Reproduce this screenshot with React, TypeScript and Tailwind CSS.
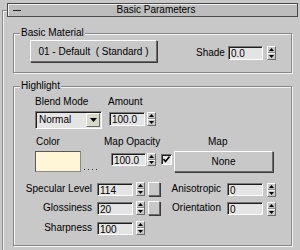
import React from "react";

const font = { fontFamily: '"Liberation Sans", Arial, sans-serif' };

function Spinner({ h = 14 }: { h?: number }) {
  return (
    <div
      className={`w-[9px] flex flex-col border border-t-white border-l-white border-r-[#6a6a6a] border-b-[#6a6a6a] bg-[#c8c8c8] ${h === 13 ? "h-[13px]" : "h-[14px]"}`}
    >
      <div className="flex-1 flex items-center justify-center border-b border-b-[#8a8a8a]">
        <svg width="5" height="3" viewBox="0 0 5 3">
          <polygon points="2.5,0 5,3 0,3" fill="#000" />
        </svg>
      </div>
      <div className="flex-1 flex items-center justify-center border-t border-t-white">
        <svg width="5" height="3" viewBox="0 0 5 3">
          <polygon points="0,0 5,0 2.5,3" fill="#000" />
        </svg>
      </div>
    </div>
  );
}

function Field({ v, w = "w-[36px]", h = "h-[13px]" }: { v: string; w?: string; h?: string }) {
  return (
    <div
      className={`${w} ${h} bg-[#e4e4e4] border border-t-[#7a7a7a] border-l-[#7a7a7a] border-r-white border-b-white shadow-[inset_1px_1px_0_#1e1e1e] text-[10px] leading-[11px] pl-[2px] pt-[1px] text-black overflow-hidden`}
    >
      {v}
    </div>
  );
}

function Group({ label, className, children }: { label: string; className: string; children: React.ReactNode }) {
  return (
    <div
      className={`relative border border-[#878787] shadow-[inset_1px_1px_0_#f4f4f4,1px_1px_0_#f4f4f4] ${className}`}
    >
      <span className="absolute left-[6px] top-[-7px] px-[1px] bg-[#c8c8c8] text-[10px] leading-[12px] text-black">
        {label}
      </span>
      {children}
    </div>
  );
}

const raised =
  "bg-[#c8c8c8] border border-t-white border-l-white border-r-[#6a6a6a] border-b-[#6a6a6a] shadow-[1px_1px_0_#3a3a3a]";

export default function App() {
  return (
    <div className="w-[300px] h-[250px] bg-[#c8c8c8] overflow-hidden pt-[3px] text-black" style={font}>
      {/* title bar */}
      <div className="relative z-10 ml-[7px] w-[291px] h-[14px] bg-[#bdbdbd] border border-[#4a4a4a] shadow-[inset_1px_1px_0_#eeeeee] flex items-center">
        <span className="ml-[5px] w-[8px] h-[1px] bg-[#222]" />
        <span className="flex-1 text-center text-[10px] leading-[12px] pr-[6px]">Basic Parameters</span>
      </div>

      {/* outer panel */}
      <div className="-mt-[7px] ml-[2px] w-[296px] h-[250px] border-l border-t border-[#8a8a8a] shadow-[inset_1px_1px_0_#f0f0f0] pt-[22px] pl-[10px]">
        <Group label="Basic Material" className="w-[279px] h-[40px]">
          <div className="flex items-start pt-[6px] pl-[16px]">
            <div className={`${raised} w-[127px] h-[22px] flex items-center justify-center text-[10px] whitespace-pre`}>
              {"01 - Default  ( Standard )"}
            </div>
            <div className="ml-[39px] mt-[7px] w-[32px] text-[10px] leading-[12px]">Shade</div>
            <div className="mt-[6px]">
              <Field v="0.0" w="w-[35px]" h="h-[14px]" />
            </div>
            <div className="mt-[6px] ml-[4px]">
              <Spinner />
            </div>
          </div>
        </Group>

        <Group label="Highlight" className="mt-[13px] w-[279px] h-[160px]">
          {/* row A */}
          <div className="flex pt-[9px] pl-[21px] text-[10px] leading-[12px]">
            <span className="w-[73px]">Blend Mode</span>
            <span>Amount</span>
          </div>
          {/* row B */}
          <div className="flex items-start mt-[3px] pl-[21px]">
            <div className="w-[67px] h-[18px] bg-[#e4e4e4] border border-t-[#7a7a7a] border-l-[#7a7a7a] border-r-white border-b-white shadow-[inset_1px_1px_0_#1e1e1e] flex items-center">
              <span className="flex-1 text-[10px] leading-[12px] pl-[3px]">Normal</span>
              <div className={`w-[14px] h-[14px] mr-[1px] flex items-center justify-center bg-[#d8d8cc] border border-t-white border-l-white border-r-[#6a6a6a] border-b-[#6a6a6a]`}>
                <svg width="7" height="4" viewBox="0 0 7 4">
                  <polygon points="0,0 7,0 3.5,4" fill="#000" />
                </svg>
              </div>
            </div>
            <div className="ml-[7px] mt-[1px]">
              <Field v="100.0" w="w-[36px]" h="h-[14px]" />
            </div>
            <div className="ml-[2px] mt-[1px]">
              <Spinner />
            </div>
          </div>
          {/* row C */}
          <div className="flex mt-[7px] pl-[22px] text-[10px] leading-[12px]">
            <span className="w-[68px]">Color</span>
            <span className="w-[104px]">Map Opacity</span>
            <span>Map</span>
          </div>
          {/* row D */}
          <div className="flex items-start mt-[3px] pl-[21px]">
            <div className="w-[46px] h-[21px] bg-[#fff6d8] border border-t-[#5a5a5a] border-l-[#5a5a5a] border-r-[#8a8a8a] border-b-[#8a8a8a]" />
            <div className="ml-[3px] w-[18px] h-[21px] flex items-end pb-[2px] gap-[3px]">
              <span className="w-[1px] h-[1px] bg-[#333]" />
              <span className="w-[1px] h-[1px] bg-[#333]" />
              <span className="w-[1px] h-[1px] bg-[#333]" />
              <span className="w-[1px] h-[1px] bg-[#333]" />
            </div>
            <div className="ml-[9px] mt-[2px]">
              <Field v="100.0" w="w-[35px]" h="h-[13px]" />
            </div>
            <div className="ml-[1px] mt-[2px]">
              <Spinner h={13} />
            </div>
            <div className="ml-[5px] mt-[3px] w-[11px] h-[11px] bg-[#e8e8e8] border border-t-[#6a6a6a] border-l-[#6a6a6a] border-r-white border-b-white shadow-[inset_1px_1px_0_#1e1e1e] flex items-center justify-center">
              <svg width="7" height="7" viewBox="0 0 7 7">
                <polyline points="0.5,3 2.5,5.5 6.5,0.5" fill="none" stroke="#000" strokeWidth="1.6" />
              </svg>
            </div>
            <div className={`${raised} ml-[2px] w-[99px] h-[21px] flex items-center justify-center text-[10px]`}>
              None
            </div>
          </div>
          {/* rows E-G */}
          <div className="mt-[10px] flex flex-col">
            <div className="flex items-center h-[14px]">
              <span className="w-[78px] text-right text-[10px] leading-[12px]">Specular Level</span>
              <div className="ml-[5px] mt-[1px]"><Field v="114" /></div>
              <div className="ml-[3px]"><Spinner /></div>
              <div className={`${raised} ml-[3px] w-[12px] h-[14px]`} />
              <span className="w-[61px] text-right text-[10px] leading-[12px]">Anisotropic</span>
              <div className="ml-[6px] mt-[1px]"><Field v="0" /></div>
              <div className="ml-[4px] mt-[1px]"><Spinner /></div>
            </div>
            <div className="flex items-center h-[14px] mt-[5px]">
              <span className="w-[78px] text-right text-[10px] leading-[12px]">Glossiness</span>
              <div className="ml-[5px] mt-[1px]"><Field v="20" /></div>
              <div className="ml-[3px]"><Spinner /></div>
              <div className={`${raised} ml-[3px] w-[12px] h-[14px]`} />
              <span className="w-[61px] text-right text-[10px] leading-[12px]">Orientation</span>
              <div className="ml-[6px] mt-[1px]"><Field v="0" /></div>
              <div className="ml-[4px] mt-[1px]"><Spinner /></div>
            </div>
            <div className="flex items-center h-[14px] mt-[6px]">
              <span className="w-[78px] text-right text-[10px] leading-[12px]">Sharpness</span>
              <div className="ml-[5px]"><Field v="100" /></div>
              <div className="ml-[3px]"><Spinner /></div>
            </div>
          </div>
        </Group>
      </div>
    </div>
  );
}
